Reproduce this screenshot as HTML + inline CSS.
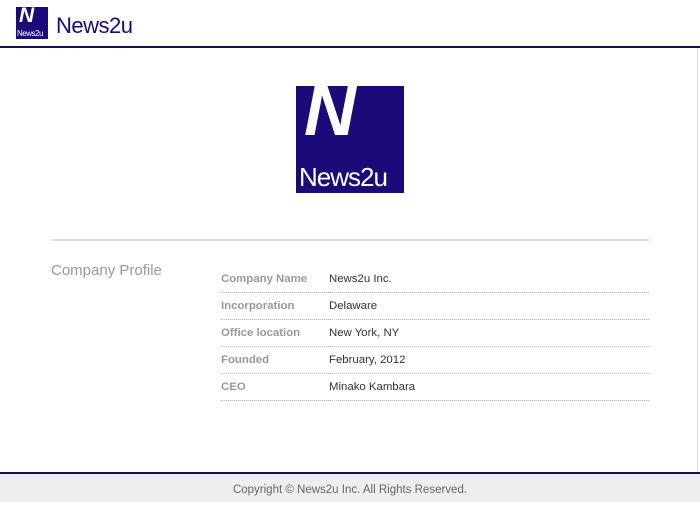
<!DOCTYPE html>
<html><head><meta charset="utf-8"><style>
*{margin:0;padding:0;box-sizing:border-box}
body{width:700px;height:502px;background:#fff;font-family:"Liberation Sans",Verdana,sans-serif;position:relative;overflow:hidden}
.abs{position:absolute}
.logo-s{left:16px;top:7px;width:32px;height:32px;background:#1a0a7a;color:#fff;overflow:hidden}
.logo-s .n{position:absolute;left:3px;top:-3px;font-weight:bold;font-size:21px;font-style:italic}
.logo-s .t{position:absolute;left:1px;bottom:1px;font-size:8px;letter-spacing:-0.5px}
.brand{left:56px;top:13px;font-size:22px;color:#1a0a7a;letter-spacing:-0.5px}
.big{left:296px;top:86px;width:108px;height:107px;background:#1a0a7a;color:#fff;overflow:hidden}
.big .n{position:absolute;left:8px;top:-16px;font-weight:bold;font-size:72px;font-style:italic}
.big .t{position:absolute;left:3px;top:76px;font-size:26px;letter-spacing:-1px}
.hr{left:52px;top:239px;width:597px;height:2px;background:#ddd}
.cp{left:51px;top:262px;font-size:15px;color:#999}
table{position:absolute;left:221px;top:265px;width:428px;border-collapse:collapse;font-size:11.4px}
td{height:27px;border-bottom:1px dotted #bbb;vertical-align:middle;padding-top:1px}
td.k{width:108px;color:#999;font-weight:bold}
td.v{color:#333}
.foot{left:0;top:472px;width:700px;height:30px;background:#eee;border-top:2px solid #1a1050;text-align:center;font-size:11.5px;color:#666;line-height:32px}
</style></head><body>
<div class="abs" style="left:0;top:46px;width:700px;height:2px;background:#1a1050"></div>
<div class="abs" style="left:697px;top:48px;width:1px;height:424px;background:#ddd"></div>
<div class="abs logo-s"><span class="n">N</span><span class="t">News2u</span></div>
<div class="abs brand">News2u</div>
<div class="abs big"><span class="n">N</span><span class="t">News2u</span></div>
<div class="abs hr"></div>
<div class="abs cp">Company Profile</div>
<table>
<tr><td class="k">Company Name</td><td class="v">News2u Inc.</td></tr>
<tr><td class="k">Incorporation</td><td class="v">Delaware</td></tr>
<tr><td class="k">Office location</td><td class="v">New York, NY</td></tr>
<tr><td class="k">Founded</td><td class="v">February, 2012</td></tr>
<tr><td class="k">CEO</td><td class="v">Minako Kambara</td></tr>
</table>
<div class="abs foot">Copyright © News2u Inc. All Rights Reserved.</div>
</body></html>
